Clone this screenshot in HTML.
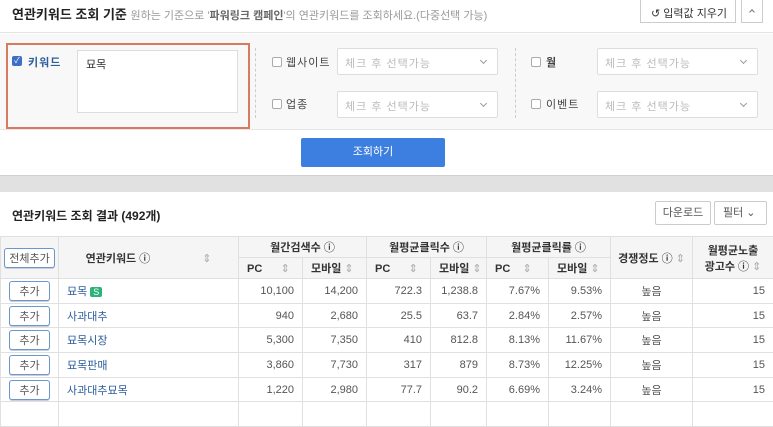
<!DOCTYPE html>
<html><head><meta charset="utf-8"><style>
*{margin:0;padding:0;box-sizing:border-box}
body{width:773px;height:406px;overflow:hidden;background:#fff;font-family:"Liberation Sans","Noto Sans CJK KR",sans-serif;font-size:11px;color:#333;position:relative}
.a{position:absolute}
.sel{position:absolute;height:27px;border:1px solid #ddd;background:#fff;border-radius:2px;color:#bbb;font-size:11px;padding:6px 7px;letter-spacing:1px}
.sel:after{content:"";position:absolute;right:11px;top:9px;width:4px;height:4px;border-right:1px solid #999;border-bottom:1px solid #999;transform:rotate(45deg)}
.cb{position:absolute;width:10px;height:10px;border:1px solid #aaa;border-radius:2px;background:#fff}
.lbl{position:absolute;font-size:11px;color:#444;letter-spacing:1px}
table{position:absolute;left:0;top:236px;border-collapse:collapse;table-layout:fixed;width:773px}
td,th{border:1px solid #e0e0e0;height:24.7px;font-size:11px;font-weight:normal;white-space:nowrap;overflow:hidden}
th{background:#f5f5f5;color:#333;font-weight:bold;height:21px}
td{color:#555;text-align:right;padding-right:8px}
td.c{text-align:center;padding:0}
td.k{text-align:left;padding-left:8px;color:#2d5d9c}
.btn{display:inline-block;border:1px solid #6b97c9;border-radius:3px;color:#555;padding:1px 9px;font-size:11px;background:#fff;box-shadow:0 1px 0 #ccd}
.s{font-weight:normal;color:#aaa}
th.l{text-align:left;padding-left:8px}
</style></head><body>
<div class="a" style="left:0;top:0;width:773px;height:33px;border-bottom:1px solid #e3e3e3"></div>
<div class="a" style="left:12px;top:4px;font-size:13px;font-weight:bold;color:#222">연관키워드 조회 기준 <span style="font-size:11px;font-weight:normal;color:#999">원하는 기준으로 '<b style="color:#666">파워링크 캠페인</b>'의 연관키워드를 조회하세요.(다중선택 가능)</span></div>
<div class="a" style="left:640px;top:0;width:96px;height:23px;border:1px solid #ccc;border-top:none;background:#fff;font-size:11px;padding:5px 0 0 10px;color:#333">↺ 입력값 지우기</div>
<div class="a" style="left:741px;top:0;width:22px;height:23px;border:1px solid #ccc;border-top:none;background:#fff"><div class="a" style="left:8px;top:10px;width:4px;height:4px;border-left:1px solid #777;border-top:1px solid #777;transform:rotate(45deg)"></div></div>
<div class="a" style="left:0;top:34px;width:773px;height:96px;background:#f8f8f8;border-bottom:1px solid #e6e6e6"></div>
<div class="a" style="left:6px;top:43px;width:244px;height:86px;border:2px solid #d77a5e;background:#f8f8f8"></div>
<div class="a" style="left:12px;top:56px;width:10px;height:10px;background:#3e6fc7;border-radius:2px;color:#fff;font-size:8px;line-height:10px;text-align:center">✓</div>
<div class="lbl" style="left:28px;top:54px;color:#2d5d9c;font-weight:bold">키워드</div>
<div class="a" style="left:77px;top:50px;width:161px;height:63px;border:1px solid #ddd;background:#fff;padding:5px 8px;font-size:11px">묘목</div>
<div class="a" style="left:255px;top:48px;height:70px;border-left:1px dashed #ccc"></div>
<div class="a" style="left:515px;top:48px;height:70px;border-left:1px dashed #ccc"></div>
<div class="cb" style="left:272px;top:57px"></div><div class="lbl" style="left:286px;top:54px">웹사이트</div>
<div class="cb" style="left:272px;top:99px"></div><div class="lbl" style="left:286px;top:96px">업종</div>
<div class="cb" style="left:531px;top:57px"></div><div class="lbl" style="left:546px;top:54px;font-weight:bold">월</div>
<div class="cb" style="left:531px;top:99px"></div><div class="lbl" style="left:546px;top:96px">이벤트</div>
<div class="sel" style="left:337px;top:48px;width:161px">체크 후 선택가능</div>
<div class="sel" style="left:337px;top:91px;width:161px">체크 후 선택가능</div>
<div class="sel" style="left:597px;top:48px;width:161px">체크 후 선택가능</div>
<div class="sel" style="left:597px;top:91px;width:161px">체크 후 선택가능</div>
<div class="a" style="left:301px;top:138px;width:144px;height:29px;background:#3d7fe0;border-radius:2px;color:#fff;text-align:center;line-height:29px;font-size:11px">조회하기</div>
<div class="a" style="left:0;top:175px;width:773px;height:17px;background:#e1e1e1;border-top:1px solid #d0d0d0"></div>
<div class="a" style="left:12px;top:207px;font-size:12px;font-weight:bold;color:#222">연관키워드 조회 결과 (492개)</div>
<div class="a" style="left:655px;top:201px;width:56px;height:24px;border:1px solid #ccc;border-radius:2px;background:#fff;text-align:center;line-height:22px;color:#555">다운로드</div>
<div class="a" style="left:714px;top:201px;width:53px;height:24px;border:1px solid #ccc;border-radius:2px;background:#fff;padding-left:8px;line-height:22px;color:#555">필터 ⌄</div>
<table>
<colgroup><col style="width:58px"><col style="width:180px"><col style="width:64px"><col style="width:64px"><col style="width:64px"><col style="width:56px"><col style="width:62px"><col style="width:62px"><col style="width:82px"><col style="width:81px"></colgroup>
<tr><th rowspan="2"><span class="btn" style="font-weight:normal;padding:1px 4px">전체추가</span></th><th rowspan="2">연관키워드 ⓘ <span class="s">&nbsp;&nbsp;&nbsp;&nbsp;&nbsp;&nbsp;&nbsp;&nbsp;&nbsp;&nbsp;&nbsp;&nbsp;&nbsp;&nbsp;&nbsp;&nbsp;⇕</span></th><th colspan="2">월간검색수 ⓘ</th><th colspan="2">월평균클릭수 ⓘ</th><th colspan="2">월평균클릭률 ⓘ</th><th rowspan="2">경쟁정도 ⓘ <span class="s">⇕</span></th><th rowspan="2">월평균노출<br>광고수 ⓘ <span class="s">⇕</span></th></tr>
<tr><th class="l">PC <span class="s">&nbsp;&nbsp;&nbsp;&nbsp;&nbsp;⇕</span></th><th class="l">모바일 <span class="s">⇕</span></th><th class="l">PC <span class="s">&nbsp;&nbsp;&nbsp;&nbsp;&nbsp;⇕</span></th><th class="l">모바일 <span class="s">⇕</span></th><th class="l">PC <span class="s">&nbsp;&nbsp;&nbsp;⇕</span></th><th class="l">모바일 <span class="s">⇕</span></th></tr>
<tr><td class="c"><span class="btn">추가</span></td><td class="k">묘목 <span style="background:#2db37a;color:#fff;font-size:9px;padding:0 3px;border-radius:2px">S</span></td><td>10,100</td><td>14,200</td><td>722.3</td><td>1,238.8</td><td>7.67%</td><td>9.53%</td><td class="c">높음</td><td>15</td></tr>
<tr><td class="c"><span class="btn">추가</span></td><td class="k">사과대추</td><td>940</td><td>2,680</td><td>25.5</td><td>63.7</td><td>2.84%</td><td>2.57%</td><td class="c">높음</td><td>15</td></tr>
<tr><td class="c"><span class="btn">추가</span></td><td class="k">묘목시장</td><td>5,300</td><td>7,350</td><td>410</td><td>812.8</td><td>8.13%</td><td>11.67%</td><td class="c">높음</td><td>15</td></tr>
<tr><td class="c"><span class="btn">추가</span></td><td class="k">묘목판매</td><td>3,860</td><td>7,730</td><td>317</td><td>879</td><td>8.73%</td><td>12.25%</td><td class="c">높음</td><td>15</td></tr>
<tr><td class="c"><span class="btn">추가</span></td><td class="k">사과대추묘목</td><td>1,220</td><td>2,980</td><td>77.7</td><td>90.2</td><td>6.69%</td><td>3.24%</td><td class="c">높음</td><td>15</td></tr>
<tr><td class="c"></td><td></td><td></td><td></td><td></td><td></td><td></td><td></td><td></td><td></td></tr>
</table>
</body></html>
